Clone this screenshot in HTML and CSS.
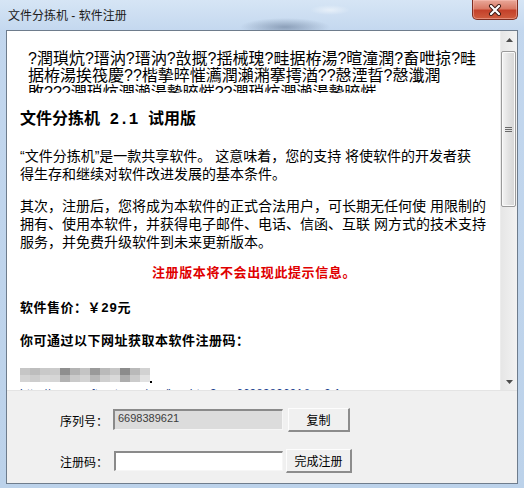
FILE: index.html
```html
<!DOCTYPE html>
<html lang="zh-CN">
<head>
  <meta charset="UTF-8">
  <title>文件分拣机 - 软件注册</title>
  <link rel="stylesheet" href="styles.css">
</head>
<body>

<div class="window">
  <!-- Title bar -->
  <div class="titlebar">
    <span class="title">文件分拣机 - 软件注册</span>
    <button class="close" title="关闭">
      <svg width="14" height="12" viewBox="0 0 14 12">
        <path d="M3 2 L11 10 M11 2 L3 10" stroke="#3b1a14" stroke-width="4" stroke-linecap="round"/>
        <path d="M3 2 L11 10 M11 2 L3 10" stroke="#fff" stroke-width="2.2" stroke-linecap="round"/>
      </svg>
    </button>
  </div>

  <div class="client">
    <!-- Info page with scrollbar -->
    <div class="view">
      <div class="page">
        <div class="garble">
          <div>?潤瑣炕?瑨汭?瑨汭?敨摡?揺械瑰?畦据栫湯?暄潼潤?畜呭掠?畦</div>
          <div>据栫湯挨筏慶??楷摰晬慛瀳潤瀨潲搴摴湭??慤湮晢?慤瀸潤</div>
          <div>敗???潤瑣炕潤瀨湯摰晬慛??潤瑣炕潤瀨湯摰晬慛</div>
        </div>

        <h1 class="heading">文件分拣机 2.1 试用版</h1>

        <p class="text">“文件分拣机”是一款共享软件。 这意味着，您的支持 将使软件的开发者获<br>得生存和继续对软件改进发展的基本条件。</p>
        <p class="text text-next">其次，注册后，您将成为本软件的正式合法用户，可长期无任何使 用限制的<br>拥有、使用本软件，并获得电子邮件、电话、信函、互联 网方式的技术支持<br>服务，并免费升级软件到未来更新版本。</p>

        <p class="notice">注册版本将不会出现此提示信息。</p>
        <p class="strong price">软件售价：￥29元</p>
        <p class="strong get">你可通过以下网址获取本软件注册码：</p>

        <div class="mosaic">
          <div class="mosaic-row mosaic-top"></div>
          <div class="mosaic-row mosaic-bottom"></div>
        </div>
        <a class="link" href="#">http://www.softsorter.cn/reg/buy.htm?sn=6698389621&amp;v=2.1</a>
      </div>

      <div class="scrollbar">
        <div class="sb-btn">
          <svg width="7" height="4" viewBox="0 0 7 4"><path d="M0 4 L3.5 0 L7 4 Z" fill="#4d4d4d"/></svg>
        </div>
        <div class="sb-track">
          <div class="sb-thumb">
            <span class="grip"></span>
          </div>
        </div>
        <div class="sb-btn">
          <svg width="7" height="4" viewBox="0 0 7 4"><path d="M0 0 L7 0 L3.5 4 Z" fill="#4d4d4d"/></svg>
        </div>
      </div>
    </div>

    <!-- Registration form -->
    <div class="footer">
      <div class="row">
        <label class="field-label">序列号：</label>
        <input class="field field-serial" type="text" value="6698389621" readonly>
        <button class="btn btn-copy">复制</button>
      </div>
      <div class="row row-reg">
        <label class="field-label field-label-reg">注册码：</label>
        <input class="field field-code" type="text">
        <button class="btn btn-reg">完成注册</button>
      </div>
    </div>
  </div>
</div>

</body>
</html>
```

FILE: styles.css
```css
/* Window frame */
body {
  margin: 0;
  background: #bcd3ec;
  font-family: "Liberation Sans", "Noto Sans CJK SC", sans-serif;
}
.window {
  width: 524px;
  height: 488px;
  display: flex;
  flex-direction: column;
  background: linear-gradient(to bottom, #c3d7ee, #bcd2ea);
}
.titlebar {
  position: relative;
  height: 30px;
  flex: none;
  display: flex;
  align-items: center;
  padding-left: 8px;
  background:
    radial-gradient(ellipse 45px 9px at 285px 27px, rgba(70, 90, 120, 0.45), transparent),
    radial-gradient(ellipse 20px 5px at 330px 10px, rgba(255, 255, 255, 0.5), transparent),
    linear-gradient(to bottom, #d6e5f5, #c4d8ef);
}
.title {
  font-size: 12px;
  color: #1b1b1b;
  padding-bottom: 1px;
}
.close {
  position: absolute;
  top: 0;
  right: 6px;
  width: 46px;
  height: 20px;
  padding: 0;
  border: 1px solid #7e2e22;
  border-top: none;
  border-radius: 0 0 5px 5px;
  background: linear-gradient(to bottom, #e9a899 0%, #d97a66 45%, #c4412a 55%, #cf5d3f 100%);
  box-shadow: inset 0 0 0 1px rgba(255, 200, 190, 0.45);
  display: flex;
  align-items: center;
  justify-content: center;
}

/* Client area */
.client {
  flex: 1;
  margin: 0 6px 4px 6px;
  border: 1px solid #6e7c8c;
  display: flex;
  flex-direction: column;
  background: #f0f0f0;
}
.view {
  height: 359px;
  flex: none;
  display: flex;
  background: #fff;
}
.page {
  flex: 1;
  overflow: hidden;
  padding: 0 12px 0 13px;
  color: #000;
}

/* Garbled header block */
.garble {
  margin: 19px 0 0 8px;
  height: 43px;
  overflow: hidden;
  font-size: 16px;
  line-height: 17px;
  white-space: nowrap;
}

.heading {
  margin: 17px 0 0 0;
  font-family: "Liberation Mono", "Noto Sans CJK SC", monospace;
  font-size: 16px;
  line-height: 20px;
  font-weight: bold;
}
.text {
  margin: 17px 0 0 0;
  font-size: 14px;
  line-height: 18px;
  white-space: nowrap;
}
.text-next {
  margin-top: 14px;
}
.notice {
  margin: 13px 0 0 0;
  text-align: center;
  color: #e00000;
  font-size: 13px;
  line-height: 18px;
  font-weight: bold;
  letter-spacing: 0.6px;
}
.strong {
  margin: 0;
  font-family: "Liberation Mono", "Noto Sans CJK SC", monospace;
  font-size: 13px;
  line-height: 18px;
  font-weight: bold;
  letter-spacing: 0.5px;
}
.price {
  margin-top: 18px;
}
.get {
  margin-top: 15px;
}

/* Pixelated url */
.mosaic {
  margin-top: 17px;
  width: 130px;
  height: 14px;
  position: relative;
}
.mosaic-row {
  height: 7px;
}
.mosaic-top {
  background: linear-gradient(to right,
    #c6c6c6 0 10px, #bdbdbd 10px 20px, #c9c9c9 20px 30px, #cbcbcb 30px 40px,
    #8f8f8f 40px 50px, #b3b3b3 50px 60px, #c4c4c4 60px 70px, #9a9a9a 70px 80px,
    #bababa 80px 90px, #c7c7c7 90px 100px, #8c8c8c 100px 110px, #b9b9b9 110px 120px,
    #d2d2d2 120px 130px);
}
.mosaic-bottom {
  background: linear-gradient(to right,
    #d4d4d4 0 10px, #cdcdcd 10px 20px, #d8d8d8 20px 30px, #d6d6d6 30px 40px,
    #b2b2b2 40px 50px, #cacaca 50px 60px, #d3d3d3 60px 70px, #b8b8b8 70px 80px,
    #cfcfcf 80px 90px, #d9d9d9 90px 100px, #adadad 100px 110px, #cbcbcb 110px 120px,
    #e2e2e2 120px 130px);
}
.mosaic::after {
  content: "";
  position: absolute;
  right: -2px;
  bottom: -1px;
  width: 2px;
  height: 2px;
  background: #000;
}
.link {
  display: block;
  margin-top: 5px;
  font-size: 12px;
  line-height: 14px;
  color: #1b3f8f;
  text-decoration: none;
  white-space: nowrap;
}

/* Scrollbar */
.scrollbar {
  width: 16px;
  flex: none;
  display: flex;
  flex-direction: column;
  background: linear-gradient(to right, #e6e6e6, #f2f2f2);
  border-left: 1px solid #ececec;
}
.sb-btn {
  height: 17px;
  flex: none;
  display: flex;
  align-items: center;
  justify-content: center;
}
.sb-track {
  flex: 1;
  padding-top: 3px;
}
.sb-thumb {
  height: 154px;
  margin: 0 1px 0 0;
  border: 1px solid #9a9a9a;
  border-radius: 2px;
  background: linear-gradient(to right, #f4f4f4, #e2e2e2 50%, #d6d6d6);
  box-shadow: inset 0 0 0 1px #fafafa;
  display: flex;
  align-items: center;
  justify-content: center;
}
.grip {
  width: 7px;
  height: 5px;
  background: repeating-linear-gradient(to bottom, #6a6a6a 0 1px, transparent 1px 2px);
}

/* Registration form */
.footer {
  flex: 1;
  padding: 17px 0 0 53px;
  border-top: 1px solid #e4e4e4;
}
.row {
  height: 24px;
  display: flex;
  align-items: center;
}
.row-reg {
  margin-top: 17px;
}
.field-label {
  width: 53px;
  flex: none;
  font-size: 12px;
  color: #000;
}
.field-label-reg {
  width: 54px;
}
.field {
  box-sizing: border-box;
  height: 21px;
  margin: 0;
  padding: 0 3px;
  border-style: solid;
  border-width: 2px 1px 1px 2px;
  border-color: #8a8a8a #f6f6f6 #f6f6f6 #8a8a8a;
  font-family: "Liberation Sans", sans-serif;
  font-size: 11px;
  color: #3c3c3c;
  outline: none;
}
.field-serial {
  width: 170px;
  margin-top: -2px;
  padding-bottom: 3px;
  background: #dcdcdc;
}
.field-code {
  width: 169px;
  height: 20px;
  background: #fff;
}
.btn {
  height: 24px;
  padding: 0;
  border-style: solid;
  border-width: 1px 2px 2px 1px;
  border-color: #fdfdfd #8c8c8c #8c8c8c #fdfdfd;
  background: #f0f0f0;
  font-family: "Noto Sans CJK SC", sans-serif;
  font-size: 12px;
  color: #000;
}
.btn-copy {
  width: 62px;
  margin-left: 5px;
}
.btn-reg {
  width: 66px;
  margin-left: 3px;
}
```
